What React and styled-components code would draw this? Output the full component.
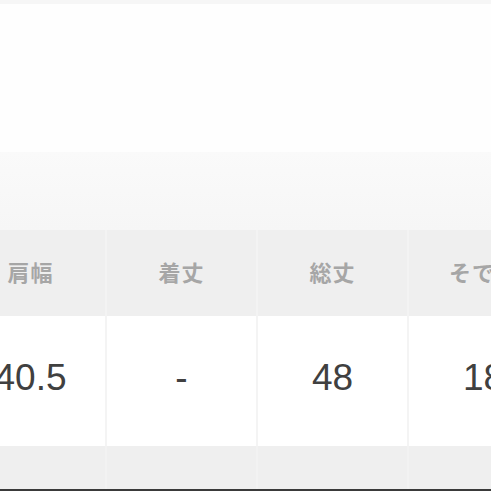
import React from 'react';
import styled, { createGlobalStyle } from 'styled-components';

const GlobalStyle = createGlobalStyle`
  html, body {
    margin: 0;
    padding: 0;
    background: #fff;
    overflow: hidden;
  }
`;

const Page = styled.div`
  width: 491px;
  height: 491px;
  overflow: hidden;
  display: flex;
  flex-direction: column;
  background: #fefefe;
`;

const TopStrip = styled.div`
  height: 4px;
  background: #f6f6f6;
  flex: none;
`;

const Blank = styled.div`
  height: 148px;
  flex: none;
`;

const Band = styled.div`
  height: 78px;
  flex: none;
  background: linear-gradient(#fafafa, #f6f6f6);
`;

const Table = styled.div`
  display: flex;
  flex-direction: column;
  margin-left: -44px;
  flex: none;
`;

const Row = styled.div`
  display: flex;
  height: ${(p) => p.h}px;
  background: ${(p) => p.bg};
`;

const Cell = styled.div`
  flex: none;
  width: 151px;
  box-sizing: border-box;
  display: flex;
  align-items: center;
  justify-content: center;
  padding-bottom: ${(p) => p.lift || 0}px;
  border-right: 2px solid ${(p) => p.line};
`;

const HeadText = styled.span`
  font-family: "Noto Sans CJK JP", "Noto Sans", sans-serif;
  font-size: 22px;
  font-weight: 700;
  color: #a6a6a6;
  letter-spacing: 1px;
`;

const ValueText = styled.span`
  font-family: "Liberation Sans", Arial, sans-serif;
  font-size: 37px;
  color: #404040;
`;

const BottomLine = styled.div`
  height: 2px;
  flex: none;
  background: #3a3a3a;
`;

const columns = [
  { label: '肩幅', value: '40.5' },
  { label: '着丈', value: '-' },
  { label: '総丈', value: '48' },
  { label: 'そで丈', value: '18' },
];

export default function App() {
  return (
    <>
      <GlobalStyle />
      <Page>
        <TopStrip />
        <Blank />
        <Band />
        <Table>
          <Row h={86} bg="#efefef">
            {columns.map((c) => (
              <Cell key={c.label} line="#f3f3f3" lift={4}>
                <HeadText>{c.label}</HeadText>
              </Cell>
            ))}
          </Row>
          <Row h={130} bg="#ffffff">
            {columns.map((c) => (
              <Cell key={c.label} line="#f4f4f4" lift={6}>
                <ValueText>{c.value}</ValueText>
              </Cell>
            ))}
          </Row>
          <Row h={43} bg="#efefef">
            {columns.map((c) => (
              <Cell key={c.label} line="#f2f2f2" />
            ))}
          </Row>
        </Table>
        <BottomLine />
      </Page>
    </>
  );
}
